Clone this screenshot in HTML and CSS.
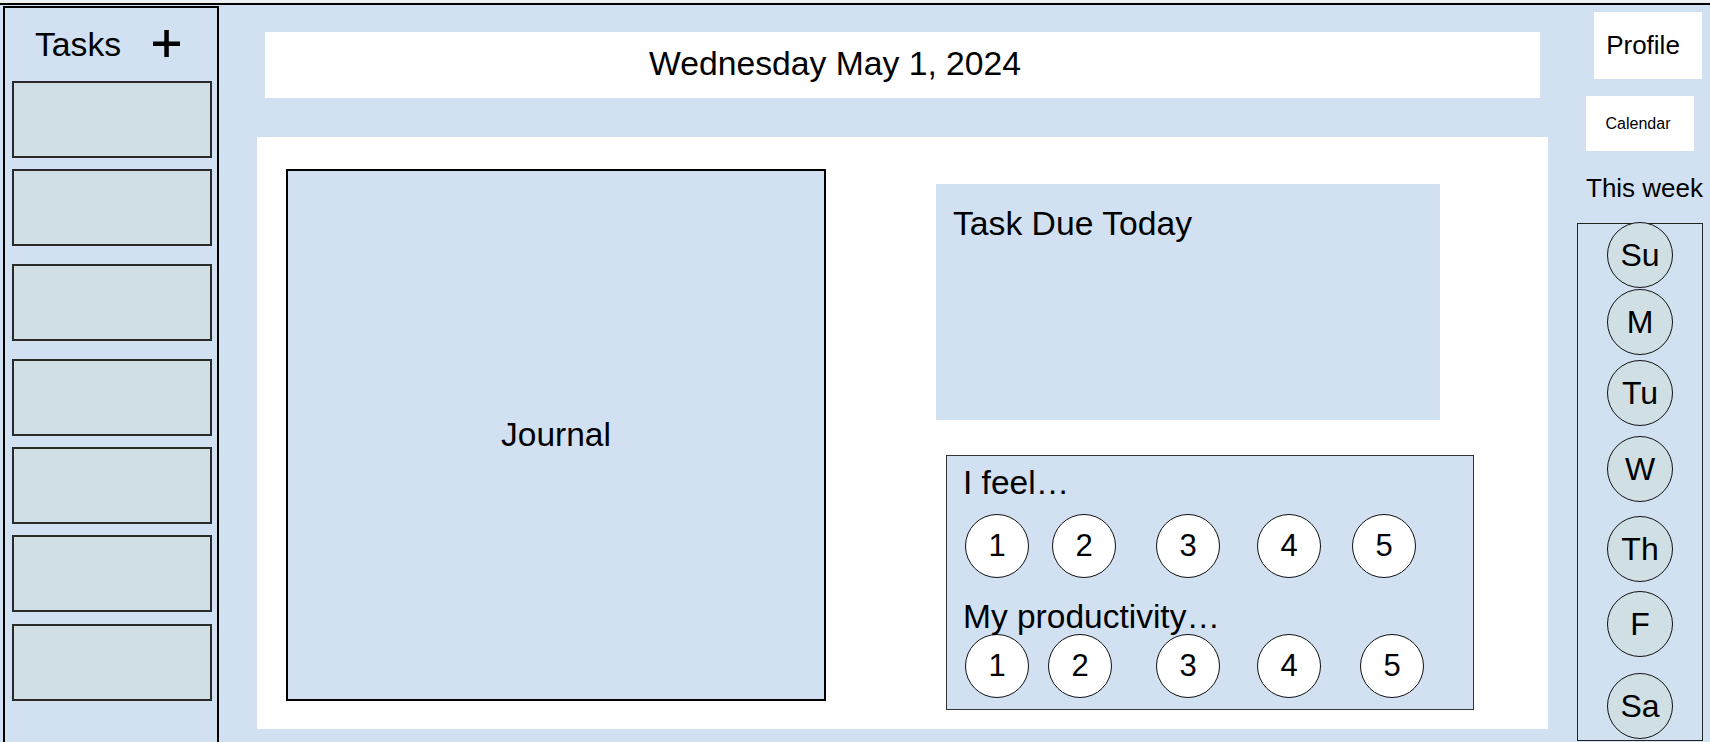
FILE: index.html
```html
<!DOCTYPE html>
<html lang="en">
<head>
<meta charset="utf-8">
<title>Planner</title>
<link rel="stylesheet" href="styles.css">
</head>
<body>
<div class="app">
  <aside class="sidebar">
    <div class="tasks-head">
      <span class="tasks-title">Tasks</span>
      <svg class="plus" width="28" height="28" viewBox="0 0 28 28" aria-label="Add task">
        <rect x="0" y="11.5" width="27" height="4.5" fill="#000"/>
        <rect x="11.3" y="0" width="4.5" height="27" fill="#000"/>
      </svg>
    </div>
    <div class="card card-first"></div>
    <div class="card"></div>
    <div class="card card-spaced"></div>
    <div class="card card-spaced"></div>
    <div class="card"></div>
    <div class="card"></div>
    <div class="card card-last"></div>
  </aside>

  <main class="main">
    <div class="datebar">Wednesday May 1, 2024</div>
    <section class="panel">
      <div class="journal">Journal</div>
      <div class="panel-right">
        <div class="due">
          <div class="due-title">Task Due Today</div>
        </div>
        <div class="mood">
          <div class="mood-label">I feel…</div>
          <div class="scale scale-feel">
            <span class="num">1</span>
            <span class="num">2</span>
            <span class="num">3</span>
            <span class="num">4</span>
            <span class="num">5</span>
          </div>
          <div class="mood-label mood-label-prod">My productivity…</div>
          <div class="scale scale-prod">
            <span class="num">1</span>
            <span class="num">2</span>
            <span class="num">3</span>
            <span class="num">4</span>
            <span class="num">5</span>
          </div>
        </div>
      </div>
    </section>
  </main>

  <aside class="rightcol">
    <div class="profile">Profile</div>
    <div class="calendar">Calendar</div>
    <div class="week-title">This week</div>
    <div class="week">
      <div class="day">Su</div>
      <div class="day">M</div>
      <div class="day">Tu</div>
      <div class="day">W</div>
      <div class="day">Th</div>
      <div class="day">F</div>
      <div class="day">Sa</div>
    </div>
  </aside>
</div>
</body>
</html>
```

FILE: styles.css
```css
* {
  box-sizing: border-box;
}

html, body {
  margin: 0;
  padding: 0;
}

body {
  background: #eef0f2;
  font-family: "Liberation Sans", Arial, sans-serif;
  color: #000;
  overflow: hidden;
}

.app {
  margin-top: 3px;
  height: 739px;
  border-top: 2px solid #000;
  background: #d1e1f2;
  display: flex;
  align-items: stretch;
  overflow: hidden;
}

/* ---------- Left sidebar ---------- */
.sidebar {
  width: 216px;
  margin: 1px 0 0 3px;
  border: 2px solid #000;
  border-bottom: none;
  display: flex;
  flex-direction: column;
  flex-shrink: 0;
}

.tasks-head {
  display: flex;
  align-items: center;
  padding: 18px 0 0 30px;
}

.tasks-title {
  font-size: 33.7px;
  line-height: 37px;
}

.plus {
  margin-left: 32px;
  margin-top: -1px;
  display: block;
}

.card {
  width: 200px;
  height: 77px;
  margin: 11px 0 0 7px;
  background: #d0dfe3;
  border: 2px solid #2a2a2a;
  flex-shrink: 0;
}

.card-first {
  margin-top: 18px;
}

.card-spaced {
  margin-top: 18px;
}

.card-last {
  margin-top: 12px;
}

/* ---------- Main column ---------- */
.main {
  width: 1358px;
  flex-shrink: 0;
  padding-top: 27px;
  display: flex;
  flex-direction: column;
}

.datebar {
  margin-left: 46px;
  width: 1275px;
  height: 66px;
  background: #fff;
  display: flex;
  align-items: center;
  padding: 0 0 3px 384px;
  font-size: 33.7px;
  white-space: nowrap;
}

.panel {
  margin: 39px 0 0 38px;
  width: 1291px;
  height: 592px;
  background: #fff;
  display: flex;
  align-items: flex-start;
  padding: 32px 0 0 29px;
}

.journal {
  width: 540px;
  height: 532px;
  flex-shrink: 0;
  background: #d1e1f2;
  border: 2px solid #000;
  display: flex;
  align-items: center;
  justify-content: center;
  font-size: 33.5px;
}

.panel-right {
  margin-left: 110px;
  display: flex;
  flex-direction: column;
  align-items: flex-start;
}

.due {
  margin-top: 15px;
  width: 504px;
  height: 236px;
  background: #d1e1f2;
  padding: 20px 0 0 17px;
}

.due-title {
  font-size: 33.7px;
  line-height: 38px;
}

.mood {
  margin: 35px 0 0 10px;
  width: 528px;
  height: 255px;
  background: #d1e1f2;
  border: 1.5px solid #333;
  padding-top: 8px;
}

.mood-label {
  font-size: 33.5px;
  line-height: 37px;
  margin-left: 16px;
  white-space: nowrap;
}

.mood-label-prod {
  position: relative;
  z-index: 1;
  margin-top: 20px;
}

.scale {
  display: flex;
  margin-left: 18px;
}

.scale-feel {
  margin-top: 13px;
}

.scale-prod {
  margin-top: -1px;
}

.num {
  width: 64px;
  height: 64px;
  flex-shrink: 0;
  border-radius: 50%;
  border: 1.5px solid #111;
  background: #fff;
  display: flex;
  align-items: center;
  justify-content: center;
  font-size: 31px;
}

.scale-feel .num:nth-child(2) { margin-left: 23px; }
.scale-feel .num:nth-child(3) { margin-left: 40px; }
.scale-feel .num:nth-child(4) { margin-left: 37px; }
.scale-feel .num:nth-child(5) { margin-left: 31px; }

.scale-prod .num:nth-child(2) { margin-left: 19px; }
.scale-prod .num:nth-child(3) { margin-left: 44px; }
.scale-prod .num:nth-child(4) { margin-left: 37px; }
.scale-prod .num:nth-child(5) { margin-left: 39px; }

/* ---------- Right column ---------- */
.rightcol {
  width: 126px;
  flex-shrink: 0;
  display: flex;
  flex-direction: column;
  align-items: flex-start;
}

.profile {
  margin: 7px 0 0 17px;
  width: 108px;
  height: 67px;
  background: #fff;
  display: flex;
  align-items: center;
  justify-content: center;
  padding-right: 10px;
  font-size: 26px;
}

.calendar {
  margin: 17px 0 0 9px;
  width: 108px;
  height: 55px;
  background: #fff;
  display: flex;
  align-items: center;
  justify-content: center;
  padding-right: 4px;
  font-size: 16px;
}

.week-title {
  margin: 22px 0 0 9px;
  font-size: 26px;
  line-height: 30px;
  white-space: nowrap;
}

.week {
  margin-top: 20px;
  width: 126px;
  height: 518px;
  border: 1.5px solid #222;
  display: flex;
  flex-direction: column;
  align-items: center;
}

.day {
  width: 66px;
  height: 66px;
  flex-shrink: 0;
  border-radius: 50%;
  border: 1.5px solid #111;
  background: #d0dfe3;
  display: flex;
  align-items: center;
  justify-content: center;
  font-size: 32px;
}

.day:nth-child(1) { margin-top: -2px; }
.day:nth-child(2) { margin-top: 1px; }
.day:nth-child(3) { margin-top: 5px; }
.day:nth-child(4) { margin-top: 10px; }
.day:nth-child(5) { margin-top: 14px; }
.day:nth-child(6) { margin-top: 9px; }
.day:nth-child(7) { margin-top: 16px; }
```
